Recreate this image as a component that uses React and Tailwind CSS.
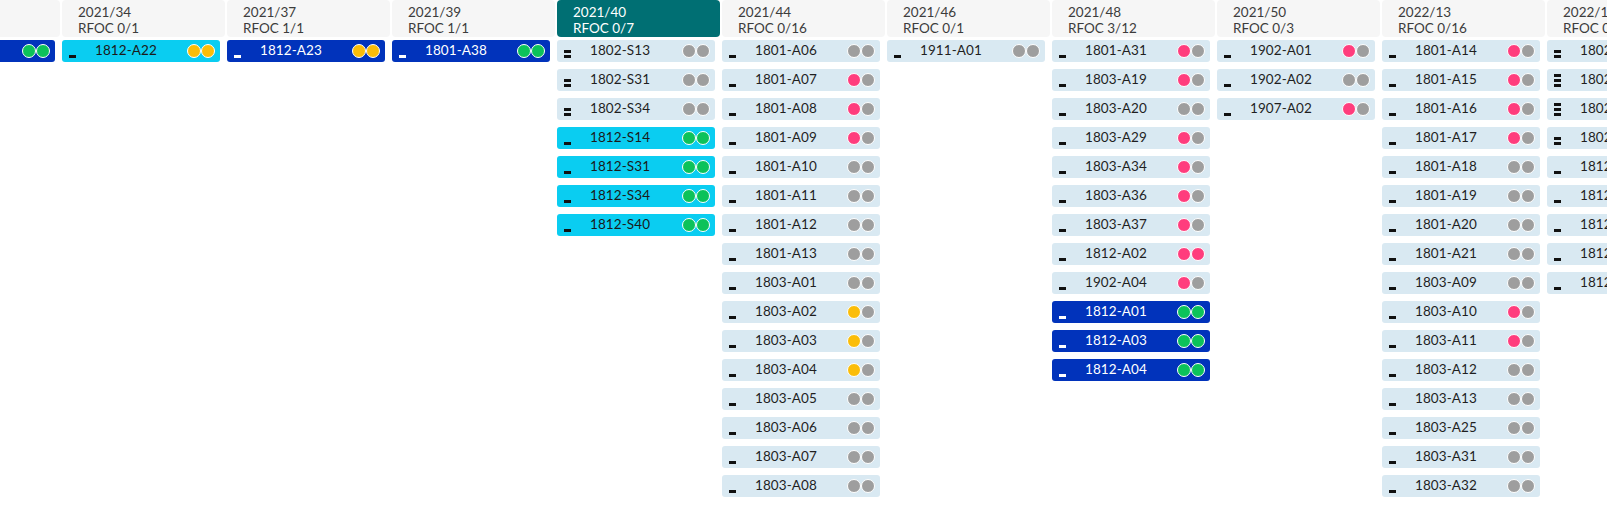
import React from "react";

const dotColors = {
  g: "bg-[#9e9e9e]",
  p: "bg-[#ff3d7d]",
  y: "bg-[#fbbd08]",
  v: "bg-[#0cc25a]",
};

const cardStyles = {
  light: "bg-[#d9e9f2] text-[#1f1f1f]",
  cyan: "bg-[#0acdf1] text-[#1a1a1a]",
  dark: "bg-[#0133bb] text-white",
};

// [label, kind, bars, dots]
const columns = [
  { week: "2021/31", rfoc: "RFOC 1/1", cards: [["1812-A21", "dark", 1, "vv"]] },
  { week: "2021/34", rfoc: "RFOC 0/1", cards: [["1812-A22", "cyan", 1, "yy"]] },
  { week: "2021/37", rfoc: "RFOC 1/1", cards: [["1812-A23", "dark", 1, "yy"]] },
  { week: "2021/39", rfoc: "RFOC 1/1", cards: [["1801-A38", "dark", 1, "vv"]] },
  {
    week: "2021/40",
    rfoc: "RFOC 0/7",
    active: true,
    cards: [
      ["1802-S13", "light", 2, "gg"],
      ["1802-S31", "light", 2, "gg"],
      ["1802-S34", "light", 2, "gg"],
      ["1812-S14", "cyan", 1, "vv"],
      ["1812-S31", "cyan", 1, "vv"],
      ["1812-S34", "cyan", 1, "vv"],
      ["1812-S40", "cyan", 1, "vv"],
    ],
  },
  {
    week: "2021/44",
    rfoc: "RFOC 0/16",
    cards: [
      ["1801-A06", "light", 1, "gg"],
      ["1801-A07", "light", 1, "pg"],
      ["1801-A08", "light", 1, "pg"],
      ["1801-A09", "light", 1, "pg"],
      ["1801-A10", "light", 1, "gg"],
      ["1801-A11", "light", 1, "gg"],
      ["1801-A12", "light", 1, "gg"],
      ["1801-A13", "light", 1, "gg"],
      ["1803-A01", "light", 1, "gg"],
      ["1803-A02", "light", 1, "yg"],
      ["1803-A03", "light", 1, "yg"],
      ["1803-A04", "light", 1, "yg"],
      ["1803-A05", "light", 1, "gg"],
      ["1803-A06", "light", 1, "gg"],
      ["1803-A07", "light", 1, "gg"],
      ["1803-A08", "light", 1, "gg"],
    ],
  },
  { week: "2021/46", rfoc: "RFOC 0/1", cards: [["1911-A01", "light", 1, "gg"]] },
  {
    week: "2021/48",
    rfoc: "RFOC 3/12",
    cards: [
      ["1801-A31", "light", 1, "pg"],
      ["1803-A19", "light", 1, "pg"],
      ["1803-A20", "light", 1, "gg"],
      ["1803-A29", "light", 1, "pg"],
      ["1803-A34", "light", 1, "pg"],
      ["1803-A36", "light", 1, "pg"],
      ["1803-A37", "light", 1, "pg"],
      ["1812-A02", "light", 1, "pp"],
      ["1902-A04", "light", 1, "pg"],
      ["1812-A01", "dark", 1, "vv"],
      ["1812-A03", "dark", 1, "vv"],
      ["1812-A04", "dark", 1, "vv"],
    ],
  },
  {
    week: "2021/50",
    rfoc: "RFOC 0/3",
    cards: [
      ["1902-A01", "light", 1, "pg"],
      ["1902-A02", "light", 1, "gg"],
      ["1907-A02", "light", 1, "pg"],
    ],
  },
  {
    week: "2022/13",
    rfoc: "RFOC 0/16",
    cards: [
      ["1801-A14", "light", 1, "pg"],
      ["1801-A15", "light", 1, "pg"],
      ["1801-A16", "light", 1, "pg"],
      ["1801-A17", "light", 1, "pg"],
      ["1801-A18", "light", 1, "gg"],
      ["1801-A19", "light", 1, "gg"],
      ["1801-A20", "light", 1, "gg"],
      ["1801-A21", "light", 1, "gg"],
      ["1803-A09", "light", 1, "gg"],
      ["1803-A10", "light", 1, "pg"],
      ["1803-A11", "light", 1, "pg"],
      ["1803-A12", "light", 1, "gg"],
      ["1803-A13", "light", 1, "gg"],
      ["1803-A25", "light", 1, "gg"],
      ["1803-A31", "light", 1, "gg"],
      ["1803-A32", "light", 1, "gg"],
    ],
  },
  {
    week: "2022/17",
    rfoc: "RFOC 0/9",
    cards: [
      ["1802-S15", "light", 2, "gg"],
      ["1802-S22", "light", 3, "gg"],
      ["1802-S23", "light", 3, "gg"],
      ["1802-S41", "light", 2, "gg"],
      ["1812-S16", "light", 1, "gg"],
      ["1812-S20", "light", 1, "gg"],
      ["1812-S27", "light", 1, "gg"],
      ["1812-S33", "light", 1, "gg"],
      ["1812-S44", "light", 1, "gg"],
    ],
  },
];

const Card = ({ label, kind, bars, dots }) => {
  const barColor = kind === "dark" ? "bg-white" : "bg-[#111]";
  return (
    <div className={`w-[158px] h-[22px] rounded-[3px] flex items-center ${cardStyles[kind]}`}>
      <div className="w-[33px] h-full shrink-0 pl-[7px] pb-[4px] flex flex-col justify-end gap-[2px]">
        {Array.from({ length: bars }).map((_, i) => (
          <div key={i} className={`w-[7px] h-[3px] ${barColor}`}></div>
        ))}
      </div>
      <div className="flex-1 text-[13.5px] leading-none tracking-[0.1px]">{label}</div>
      <div className="flex pr-[5px]">
        {dots.split("").map((d, i) => (
          <div key={i} className={`w-[14px] h-[14px] rounded-full border border-white ${dotColors[d]}`}></div>
        ))}
      </div>
    </div>
  );
};

const Column = ({ col }) => {
  return (
    <div className="w-[163px] shrink-0 flex flex-col gap-[3px]">
      <div
        className={`h-[37px] rounded-[4px] pl-[16px] pt-[4px] text-[13.5px] leading-[16px] ${
          col.active ? "bg-[#006f73] text-white" : "bg-[#f6f6f6] text-[#3c3c3c]"
        }`}
      >
        <div>{col.week}</div>
        <div>{col.rfoc}</div>
      </div>
      <div className="flex flex-col gap-[7px]">
        {col.cards.map((c) => (
          <Card key={c[0]} label={c[0]} kind={c[1]} bars={c[2]} dots={c[3]} />
        ))}
      </div>
    </div>
  );
};

const App = () => {
  return (
    <div className="w-[1607px] h-[522px] bg-white overflow-hidden" style={{ fontFamily: "Lato, 'Noto Sans', sans-serif" }}>
      <div className="flex items-start gap-[2px] -ml-[103px]">
        {columns.map((col) => (
          <Column key={col.week} col={col} />
        ))}
      </div>
    </div>
  );
};

export default App;
